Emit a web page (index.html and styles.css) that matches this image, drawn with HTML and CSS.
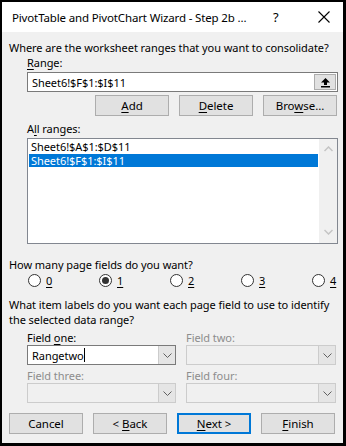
FILE: index.html
```html
<!DOCTYPE html>
<html>
<head>
<meta charset="utf-8">
<link rel="stylesheet" href="styles.css">
</head>
<body>
<div class="dialog">
  <div class="titlebar">
    <span class="title">PivotTable and PivotChart Wizard - Step 2b ...</span>
    <span class="help">?</span>
    <span class="close"><svg width="12" height="12" viewBox="0 0 12 12"><path d="M0.5 0.5 L11.5 11.5 M11.5 0.5 L0.5 11.5" stroke="#000" stroke-width="1.1" fill="none"/></svg></span>
  </div>
  <div class="body">
    <div class="text">Where are the worksheet ranges that you want to consolidate?</div>
    <div class="indent">
      <div class="label"><u>R</u>ange:</div>
      <div class="rangebox">
        <span class="rangeval">Sheet6!$F$1:$I$11</span>
        <span class="refbtn"><svg width="11" height="11" viewBox="0 0 11 11"><path d="M5.5 1 L10 5.5 L7 5.5 L7 8 L4 8 L4 5.5 L1 5.5 Z" fill="#000"/><rect x="1" y="9" width="9" height="1.5" fill="#000"/></svg></span>
      </div>
      <div class="btnrow">
        <span class="btn"><span><u>A</u>dd</span></span>
        <span class="btn"><span><u>D</u>elete</span></span>
        <span class="btn"><span>Bro<u>w</u>se...</span></span>
      </div>
      <div class="label lbl2">A<u>l</u>l ranges:</div>
      <div class="listbox">
        <div class="items">
          <div class="item">Sheet6!$A$1:$D$11</div>
          <div class="item sel">Sheet6!$F$1:$I$11</div>
        </div>
        <div class="scrollbar">
          <svg width="9" height="6" viewBox="0 0 9 6"><path d="M0.5 5 L4.5 1 L8.5 5" stroke="#c4c4c4" stroke-width="1.5" fill="none"/></svg>
          <svg width="9" height="6" viewBox="0 0 9 6"><path d="M0.5 1 L4.5 5 L8.5 1" stroke="#c4c4c4" stroke-width="1.5" fill="none"/></svg>
        </div>
      </div>
    </div>
    <div class="text q2">How many page fields do you want?</div>
    <div class="radios">
      <span class="radio"><span class="circle"></span><u>0</u></span>
      <span class="radio"><span class="circle on"></span><u>1</u></span>
      <span class="radio"><span class="circle"></span><u>2</u></span>
      <span class="radio"><span class="circle"></span><u>3</u></span>
      <span class="radio"><span class="circle"></span><u>4</u></span>
    </div>
    <div class="text q3">What item labels do you want each page field to use to identify<br>the selected data range?</div>
    <div class="fields">
      <div class="field">
        <div class="label">Field <u>o</u>ne:</div>
        <div class="combo">
          <span class="comboval">Rangetwo<span class="caret"></span></span>
          <span class="drop"><svg width="9" height="5" viewBox="0 0 9 5"><path d="M0.5 0.5 L4.5 4.5 L8.5 0.5" stroke="#606060" stroke-width="1" fill="none"/></svg></span>
        </div>
      </div>
      <div class="field dis">
        <div class="label">Field two:</div>
        <div class="combo">
          <span class="comboval"></span>
          <span class="drop"><svg width="9" height="5" viewBox="0 0 9 5"><path d="M0.5 0.5 L4.5 4.5 L8.5 0.5" stroke="#606060" stroke-width="1" fill="none"/></svg></span>
        </div>
      </div>
      <div class="field dis">
        <div class="label">Field three:</div>
        <div class="combo">
          <span class="comboval"></span>
          <span class="drop"><svg width="9" height="5" viewBox="0 0 9 5"><path d="M0.5 0.5 L4.5 4.5 L8.5 0.5" stroke="#606060" stroke-width="1" fill="none"/></svg></span>
        </div>
      </div>
      <div class="field dis">
        <div class="label">Field four:</div>
        <div class="combo">
          <span class="comboval"></span>
          <span class="drop"><svg width="9" height="5" viewBox="0 0 9 5"><path d="M0.5 0.5 L4.5 4.5 L8.5 0.5" stroke="#606060" stroke-width="1" fill="none"/></svg></span>
        </div>
      </div>
    </div>
    <div class="footer">
      <span class="btn"><span>Cancel</span></span>
      <span class="btn"><span>&lt; <u>B</u>ack</span></span>
      <span class="btn def"><span><u>N</u>ext &gt;</span></span>
      <span class="btn"><span><u>F</u>inish</span></span>
    </div>
  </div>
</div>
</body>
</html>
```

FILE: styles.css
```css
* { box-sizing: border-box; }
html, body { margin: 0; padding: 0; background: #fff; }
body {
  font-family: "Noto Sans", "DejaVu Sans", sans-serif;
  font-size: 11px;
  letter-spacing: -0.06px;
  line-height: 15px;
  color: #000;
}
u { text-decoration: underline; text-underline-offset: 2px; text-decoration-thickness: 1px; }
.dialog {
  width: 346px;
  height: 446px;
  overflow: hidden;
  border-left: 2px solid #000;
  border-top: 2px solid #000;
  border-right: 3px solid #000;
  border-bottom: 3px solid #000;
  display: flex;
  flex-direction: column;
  background: #f0f0f0;
}
.titlebar {
  height: 30px;
  flex: none;
  background: #fff;
  display: flex;
  align-items: center;
  padding-left: 10px;
  font-size: 11.5px;
  letter-spacing: -0.15px;
}
.title { width: 261px; white-space: nowrap; }
.help { width: 45px; font-size: 13px; }
.close { display: flex; }
.body {
  flex: 1;
  padding: 8px 5px 0 7px;
  display: flex;
  flex-direction: column;
}
.text { white-space: nowrap; }
.indent { padding-left: 18px; display: flex; flex-direction: column; }
.label { height: 15px; white-space: nowrap; }
.rangebox {
  margin-top: 2px;
  height: 20px;
  border: 1px solid #7a7a7a;
  background: #fff;
  display: flex;
  align-items: center;
  justify-content: space-between;
  padding: 0 1px 0 4px;
}
.refbtn {
  width: 22px;
  height: 16px;
  background: #e1e1e1;
  border: 1px solid #adadad;
  display: flex;
  align-items: center;
  justify-content: center;
}
.btnrow {
  margin-top: 3px;
  display: flex;
  justify-content: flex-end;
  gap: 10px;
  padding-right: 1px;
}
.btn {
  width: 74px;
  height: 21px;
  background: #e1e1e1;
  border: 1px solid #adadad;
  display: flex;
  align-items: center;
  justify-content: center;
  font-size: 11.5px;
  white-space: pre;
}
.lbl2 { margin-top: 5px; }
.listbox {
  margin-top: 2px;
  height: 106px;
  border: 1px solid #828790;
  background: #fff;
  display: flex;
}
.items { flex: 1; padding: 1px 1px 0 1px; }
.item { height: 13px; line-height: 13px; padding-left: 2px; margin-bottom: 1px; }
.item.sel { background: #0078d7; color: #fff; }
.scrollbar {
  width: 18px;
  background: #f0f0f0;
  display: flex;
  flex-direction: column;
  justify-content: space-between;
  align-items: center;
  padding: 7px 0 8px;
}
.q2 { margin-top: 13px; }
.radios {
  display: grid;
  grid-template-columns: repeat(5, 71px);
  padding-left: 19px;
  margin-top: 1px;
  height: 15px;
  align-items: center;
}
.radio { display: flex; align-items: center; gap: 5px; }
.circle {
  width: 13px;
  height: 13px;
  border-radius: 50%;
  border: 1px solid #333;
  background: #fff;
  display: flex;
  align-items: center;
  justify-content: center;
}
.circle.on::after {
  content: "";
  width: 7px;
  height: 7px;
  border-radius: 50%;
  background: #333;
}
.q3 { margin-top: 9px; }
.fields {
  margin-top: 3px;
  padding-left: 18px;
  display: grid;
  grid-template-columns: 149px 150px;
  column-gap: 10px;
  row-gap: 3px;
}
.combo {
  height: 20px;
  border: 1px solid #7a7a7a;
  background: #fff;
  display: flex;
}
.comboval { flex: 1; padding-left: 4px; display: flex; align-items: center; }
.caret { width: 1px; height: 14px; background: #000; }
.drop {
  width: 17px;
  background: #e5e5e5;
  border-left: 1px solid #ccc;
  display: flex;
  align-items: center;
  justify-content: center;
}
.dis .label { color: #8d8d8d; }
.dis .combo { border-color: #cccccc; background: #f0f0f0; }
.footer {
  margin-top: 10px;
  display: flex;
  gap: 10px;
}
.btn.def { border: 2px solid #0078d7; }
```
